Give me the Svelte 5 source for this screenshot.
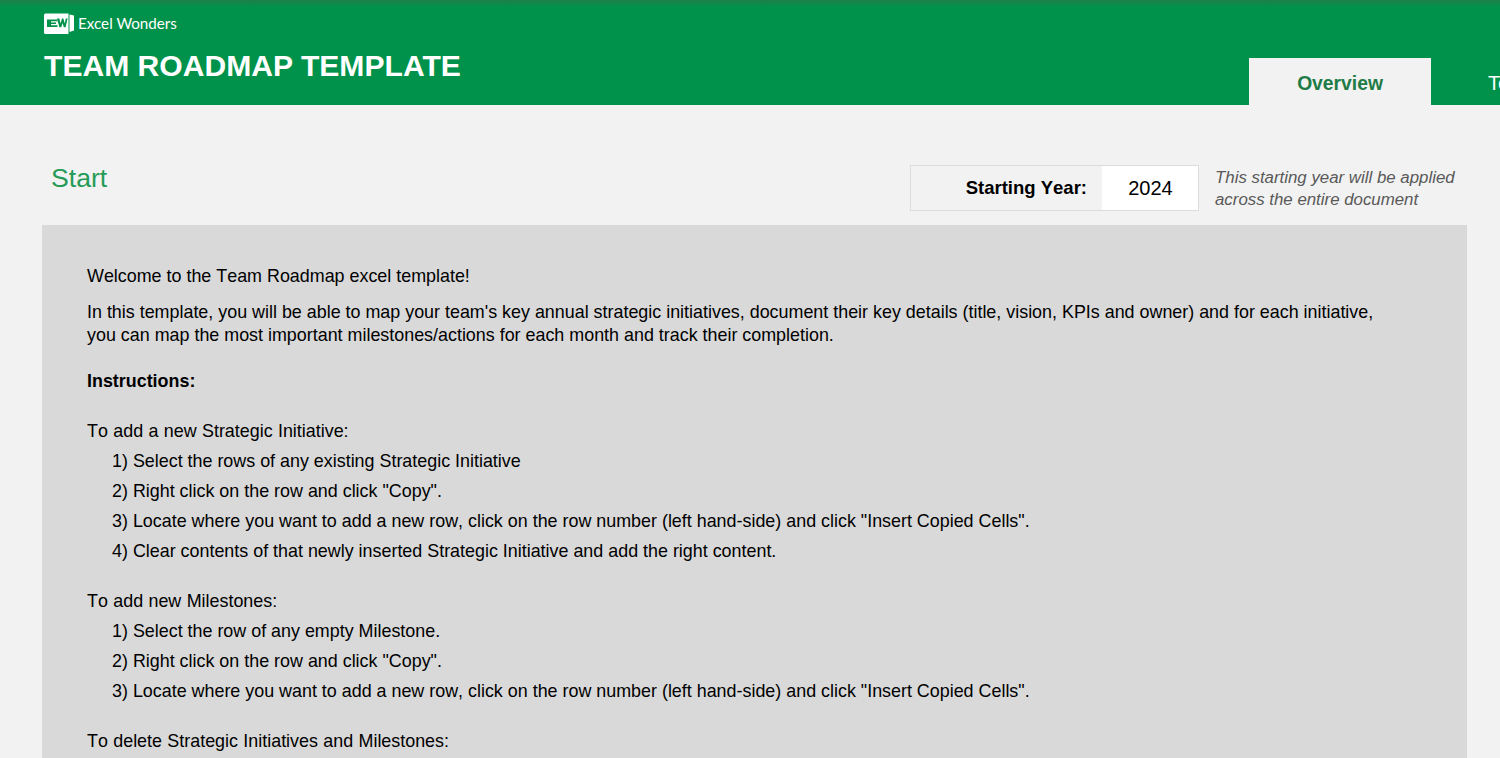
<script>
  const groups = [
    { title: 'To add a new Strategic Initiative:', steps: [
      '1) Select the rows of any existing Strategic Initiative',
      '2) Right click on the row and click "Copy".',
      '3) Locate where you want to add a new row, click on the row number (left hand-side) and click "Insert Copied Cells".',
      '4) Clear contents of that newly inserted Strategic Initiative and add the right content.'
    ]},
    { title: 'To add new Milestones:', steps: [
      '1) Select the row of any empty Milestone.',
      '2) Right click on the row and click "Copy".',
      '3) Locate where you want to add a new row, click on the row number (left hand-side) and click "Insert Copied Cells".'
    ]},
    { title: 'To delete Strategic Initiatives and Milestones:', steps: [] }
  ];
</script>

<div class="page">
  <header class="top">
    <div class="brand">
      <div class="logo">
        <svg width="30" height="23" viewBox="0 0 30 23" aria-hidden="true">
          <path d="M1.5 1.5 Q0 1.5 0 3 V20.5 Q0 22 1.5 22 H24.5 V1.5 Z" fill="#fff"/>
          <path d="M25.5 2.5 L30 3.5 V18.5 L25.5 20 Z" fill="#fff"/>
          <path d="M3 7.5 H13.5 V9.2 H7 V10.6 H12 V12 H7 V13.2 H13.5 V15 H3 Z" fill="#00924a"/>
          <path d="M13 6.5 H15.4 L16.4 11.6 L18 6.5 H19.4 L20.8 11.6 L21.8 6.5 H23.6 L21.6 15.2 H19.8 L18.6 11 L17.2 15.2 H15.4 Z" fill="#00924a"/>
        </svg>
        <span class="logo-text">Excel Wonders</span>
      </div>
      <h1>TEAM ROADMAP TEMPLATE</h1>
    </div>
    <nav class="tabs">
      <div class="tab active">Overview</div>
      <div class="tab">Tool</div>
    </nav>
  </header>

  <section class="start">
    <h2>Start</h2>
    <div class="year">
      <div class="year-label">Starting Year:</div>
      <div class="year-value">2024</div>
    </div>
    <p class="note">This starting year will be applied<br />across the entire document</p>
  </section>

  <main class="panel">
    <p class="welcome">Welcome to the Team Roadmap excel template!</p>
    <p class="intro">In this template, you will be able to map your team's key annual strategic initiatives, document their key details (title, vision, KPIs and owner) and for each initiative,<br />you can map the most important milestones/actions for each month and track their completion.</p>
    <p class="heading">Instructions:</p>
    {#each groups as g}
      <div class="group">
        <p class="row title">{g.title}</p>
        {#each g.steps as s}
          <p class="row step">{s}</p>
        {/each}
      </div>
    {/each}
  </main>
</div>

<style>
  :global(body) {
    margin: 0;
    background: #f2f2f2;
    overflow: hidden;
  }
  .page {
    width: 1500px;
    height: 758px;
    overflow: hidden;
    font-family: "Liberation Sans", Arial, sans-serif;
    font-kerning: none;
    color: #000;
  }
  .top {
    height: 105px;
    display: grid;
    grid-template-columns: 1249px 1fr;
    background: linear-gradient(#1f8048 0, #00924a 7px);
    overflow: hidden;
  }
  .brand {
    padding: 12px 0 0 44px;
  }
  .logo {
    display: flex;
    align-items: center;
    gap: 4px;
    height: 23px;
  }
  .logo svg { display: block; }
  .logo-text {
    font-family: Lato, sans-serif;
    font-kerning: normal;
    font-size: 15.2px;
    line-height: 20px;
    color: #fff;
    margin-top: -2px;
  }
  h1 {
    margin: 13px 0 0;
    font-size: 30.1px;
    font-kerning: normal;
    line-height: 36px;
    font-weight: 700;
    color: #fff;
  }
  .tabs {
    display: flex;
    align-items: flex-end;
    white-space: nowrap;
    font-kerning: normal;
  }
  .tab {
    height: 47px;
    line-height: 51px;
    font-size: 20px;
    font-weight: 400;
    color: #fff;
    padding-left: 57px;
  }
  .tab.active {
    width: 182px;
    box-sizing: border-box;
    padding: 0;
    text-align: center;
    flex: none;
    background: #f2f2f2;
    color: #1e7b45;
    font-size: 19.3px;
    font-weight: 700;
  }
  .start {
    height: 120px;
    display: flex;
    align-items: flex-start;
    padding: 60px 0 0 51px;
    box-sizing: border-box;
  }
  h2 {
    margin: -1px 0 0;
    font-size: 26.6px;
    line-height: 28px;
    font-weight: 400;
    color: #259b57;
    width: 859px;
    flex: none;
  }
  .year {
    display: flex;
    width: 289px;
    height: 46px;
    box-sizing: border-box;
    border: 1px solid #dcdcdc;
    flex: none;
  }
  .year-label {
    flex: 1;
    text-align: right;
    padding-right: 15px;
    font-size: 18.5px;
    font-weight: 700;
    line-height: 44px;
  }
  .year-value {
    width: 96px;
    padding-left: 1px;
    box-sizing: border-box;
    background: #fff;
    text-align: center;
    font-size: 20px;
    line-height: 44px;
  }
  .note {
    margin: 2px 0 0 16px;
    font-size: 16.85px;
    line-height: 22px;
    font-style: italic;
    color: #595959;
    white-space: nowrap;
  }
  .panel {
    margin-left: 42px;
    width: 1425px;
    height: 560px;
    box-sizing: border-box;
    background: #d9d9d9;
    padding: 40px 0 0 45px;
    font-size: 17.9px;
  }
  .panel p { margin: 0; white-space: nowrap; }
  .welcome { line-height: 23px; }
  .intro { margin-top: 13px !important; line-height: 23px; }
  .heading { margin-top: 23px !important; line-height: 23px; font-weight: 700; }
  .group { margin-top: 20px; }
  .heading + .group { margin-top: 23px; }
  .row { line-height: 30px; }
  .title { word-spacing: 0.4px; }
  .step { padding-left: 25px; }
</style>
